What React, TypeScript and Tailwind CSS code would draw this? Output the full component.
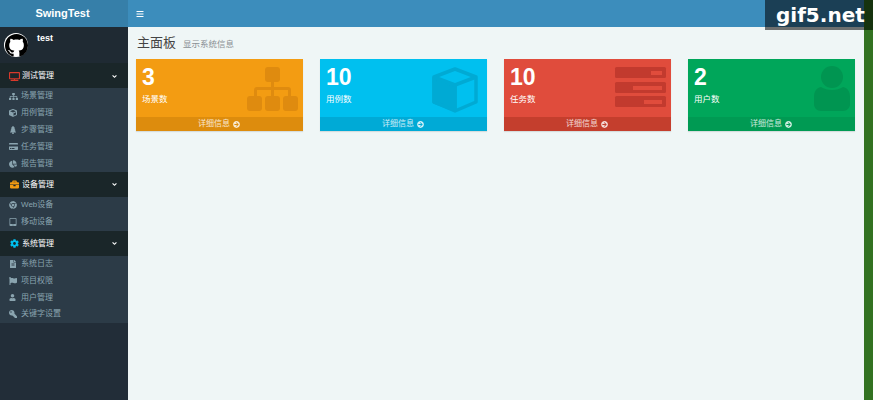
import { FaAngleDown, FaArrowCircleRight, FaBars, FaBriefcase, FaChartPie, FaChrome, FaCog, FaCreditCard, FaCube, FaFileAlt, FaFlag, FaKey, FaSitemap, FaTabletAlt, FaTree, FaTv, FaUser } from "react-icons/fa";

const menus = [
  {
    title: "测试管理",
    icon: <FaTv size={11} className="text-[#d8392b]" />,
    items: [
      { label: "场景管理", icon: <FaSitemap size={9} /> },
      { label: "用例管理", icon: <FaCube size={8} /> },
      { label: "步骤管理", icon: <FaTree size={8} /> },
      { label: "任务管理", icon: <FaCreditCard size={9} /> },
      { label: "报告管理", icon: <FaChartPie size={8} /> },
    ],
  },
  {
    title: "设备管理",
    icon: <FaBriefcase size={9} className="text-[#f39c12]" />,
    items: [
      { label: "Web设备", icon: <FaChrome size={8} /> },
      { label: "移动设备", icon: <FaTabletAlt size={8} /> },
    ],
  },
  {
    title: "系统管理",
    icon: <FaCog size={9} className="text-[#00c0ef]" />,
    items: [
      { label: "系统日志", icon: <FaFileAlt size={8} /> },
      { label: "项目权限", icon: <FaFlag size={8} /> },
      { label: "用户管理", icon: <FaUser size={7} /> },
      { label: "关键字设置", icon: <FaKey size={8} className="-scale-x-100" /> },
    ],
  },
];

function GithubLogo() {
  return (
    <div className="flex h-6 w-6 items-center justify-center rounded-full bg-white">
      <svg viewBox="0 0 16 16" className="h-[23px] w-[23px]" fill="#000">
        <path d="M8 0C3.58 0 0 3.58 0 8c0 3.54 2.29 6.53 5.47 7.59.4.07.55-.17.55-.38 0-.19-.01-.82-.01-1.49-2.01.37-2.53-.49-2.69-.94-.09-.23-.48-.94-.82-1.13-.28-.15-.68-.52-.01-.53.63-.01 1.08.58 1.23.82.72 1.21 1.87.87 2.33.66.07-.52.28-.87.51-1.07-1.78-.2-3.64-.89-3.64-3.95 0-.87.31-1.59.82-2.15-.08-.2-.36-1.02.08-2.12 0 0 .67-.21 2.2.82.64-.18 1.32-.27 2-.27s1.36.09 2 .27c1.53-1.04 2.2-.82 2.2-.82.44 1.1.16 1.92.08 2.12.51.56.82 1.27.82 2.15 0 3.07-1.87 3.75-3.65 3.95.29.25.54.73.54 1.48 0 1.07-.01 1.93-.01 2.2 0 .21.15.46.55.38A8.01 8.01 0 0 0 16 8c0-4.42-3.58-8-8-8z" />
      </svg>
    </div>
  );
}

function Sidebar() {
  return (
    <aside className="flex w-[128px] shrink-0 flex-col bg-[#222d38]">
      <div className="flex h-[27px] items-center justify-center bg-[#367fa9] pr-[3px] text-[11px] font-bold text-white">
        SwingTest
      </div>
      <div className="flex h-[36px] gap-[9px] bg-[#1f2a33] pl-1 pt-[6px]">
        <GithubLogo />
        <span className="text-[9px] font-bold leading-[10px] text-white">test</span>
      </div>
      {menus.map((menu) => (
        <div key={menu.title}>
          <div className="flex h-[25px] items-center bg-[#1a2629] pl-[7px] pr-[10px] pt-[1px] text-[8px] text-white">
            <span className="flex w-[15px] justify-center">{menu.icon}</span>
            <span className="flex-1">{menu.title}</span>
            <FaAngleDown size={7} />
          </div>
          <ul className="bg-[#2c3b47]">
            {menu.items.map((item) => (
              <li
                key={item.label}
                className="flex h-[16.8px] items-center pl-[9px] text-[8px] text-[#8aa4af]"
              >
                <span className="flex w-[12px] justify-start">{item.icon}</span>
                <span>{item.label}</span>
              </li>
            ))}
          </ul>
        </div>
      ))}
    </aside>
  );
}

function StatCard({
  value,
  label,
  bg,
  footer,
  icon,
}: {
  value: string;
  label: string;
  bg: string;
  footer: string;
  icon: React.ReactNode;
}) {
  return (
    <div className={`relative flex h-[72px] w-[167px] flex-col shadow-[0_1px_1px_rgba(0,0,0,0.1)] ${bg}`}>
      <div className="flex-1 pl-[6px] pt-[5px] text-white">
        <div className="text-[23px] font-bold leading-[27px]">{value}</div>
        <div className="mt-[2px] text-[8.5px] leading-[12px]">{label}</div>
      </div>
      <div className={`flex h-[14px] items-center justify-center gap-[3px] pr-[1px] text-[8px] text-white/80 ${footer}`}>
        <span>详细信息</span>
        <FaArrowCircleRight size={7} />
      </div>
      <div className="absolute right-0 top-0">{icon}</div>
    </div>
  );
}

const sitemapIcon = (
  <svg width="60" height="58" viewBox="0 0 60 58" fill="#df8b0f">
    <rect x="22" y="8" width="15" height="15" rx="3" />
    <rect x="4" y="37" width="15" height="15" rx="3" />
    <rect x="22" y="37" width="15" height="15" rx="3" />
    <rect x="40" y="37" width="15" height="15" rx="3" />
    <path d="M28 22h3v6h14a3 3 0 0 1 3 3v7h-3v-7H31v7h-3v-7H14v7h-3v-7a3 3 0 0 1 3-3h14z" />
  </svg>
);

const cubeIcon = (
  <svg
    width="60"
    height="58"
    viewBox="0 0 60 58"
    fill="none"
    stroke="#00aad4"
    strokeWidth="3.5"
    strokeLinejoin="round"
  >
    <path d="M7 19 28 27v24L7 43z" fill="#00aad4" />
    <path d="M28 10 49 18v25L28 52 7 43V18z" />
    <path d="M7 18 28 26 49 18M28 26v26" />
  </svg>
);

const tasksIcon = (
  <svg width="60" height="58" viewBox="0 0 60 58">
    <rect x="4" y="8" width="51" height="11" rx="1.5" fill="#c23a2e" />
    <rect x="4" y="23" width="51" height="11" rx="1.5" fill="#c23a2e" />
    <rect x="4" y="37" width="51" height="11" rx="1.5" fill="#c23a2e" />
    <rect x="40" y="12" width="11" height="4" fill="#e04c3c" />
    <rect x="22" y="27" width="29" height="4" fill="#e04c3c" />
    <rect x="33" y="41" width="18" height="4" fill="#e04c3c" />
  </svg>
);

const userIcon = (
  <svg width="60" height="58" viewBox="0 0 60 58" fill="#009551">
    <circle cx="37" cy="18" r="11" />
    <path d="M26 28c3 2 7 3 11 3s8-1 11-3c5 1 7 5 7 10v7c0 4-3 7-7 7H26c-4 0-7-3-7-7v-7c0-5 2-9 7-10z" />
  </svg>
);

export default function App() {
  return (
    <div className="relative flex h-[400px] w-[873px] overflow-hidden font-['Liberation_Sans','Noto_Sans_CJK_SC',sans-serif]">
      <Sidebar />
      <main className="flex flex-1 flex-col bg-[#eff6f6]">
        <header className="flex h-[27px] items-center bg-[#3c8dbc] pl-2 text-white">
          <FaBars size={8} />
        </header>
        <div className="flex items-baseline gap-[7px] pl-[9px] pt-[7px]">
          <h1 className="text-[13px] leading-[18px] text-[#444]">主面板</h1>
          <span className="text-[8.5px] text-[#8a8f94]">显示系统信息</span>
        </div>
        <div className="mt-[7px] flex gap-[17px] pl-2">
          <StatCard value="3" label="场景数" bg="bg-[#f39c12]" footer="bg-[#dd8c0d]" icon={sitemapIcon} />
          <StatCard value="10" label="用例数" bg="bg-[#00c0ef]" footer="bg-[#00aad6]" icon={cubeIcon} />
          <StatCard value="10" label="任务数" bg="bg-[#e04c3c]" footer="bg-[#c43e2d]" icon={tasksIcon} />
          <StatCard value="2" label="用户数" bg="bg-[#00a65a]" footer="bg-[#009a53]" icon={userIcon} />
        </div>
      </main>
      <div className="w-[9px] shrink-0 bg-[#327221]" />
      {/* gif5 watermark sits over the corner */}
      <div className="absolute right-0 top-0 flex h-[30px] w-[108px] items-center bg-black/55 pl-[11px] font-['DejaVu_Sans',sans-serif] text-[20px] font-bold leading-none text-white">
        gif5.net
      </div>
    </div>
  );
}
